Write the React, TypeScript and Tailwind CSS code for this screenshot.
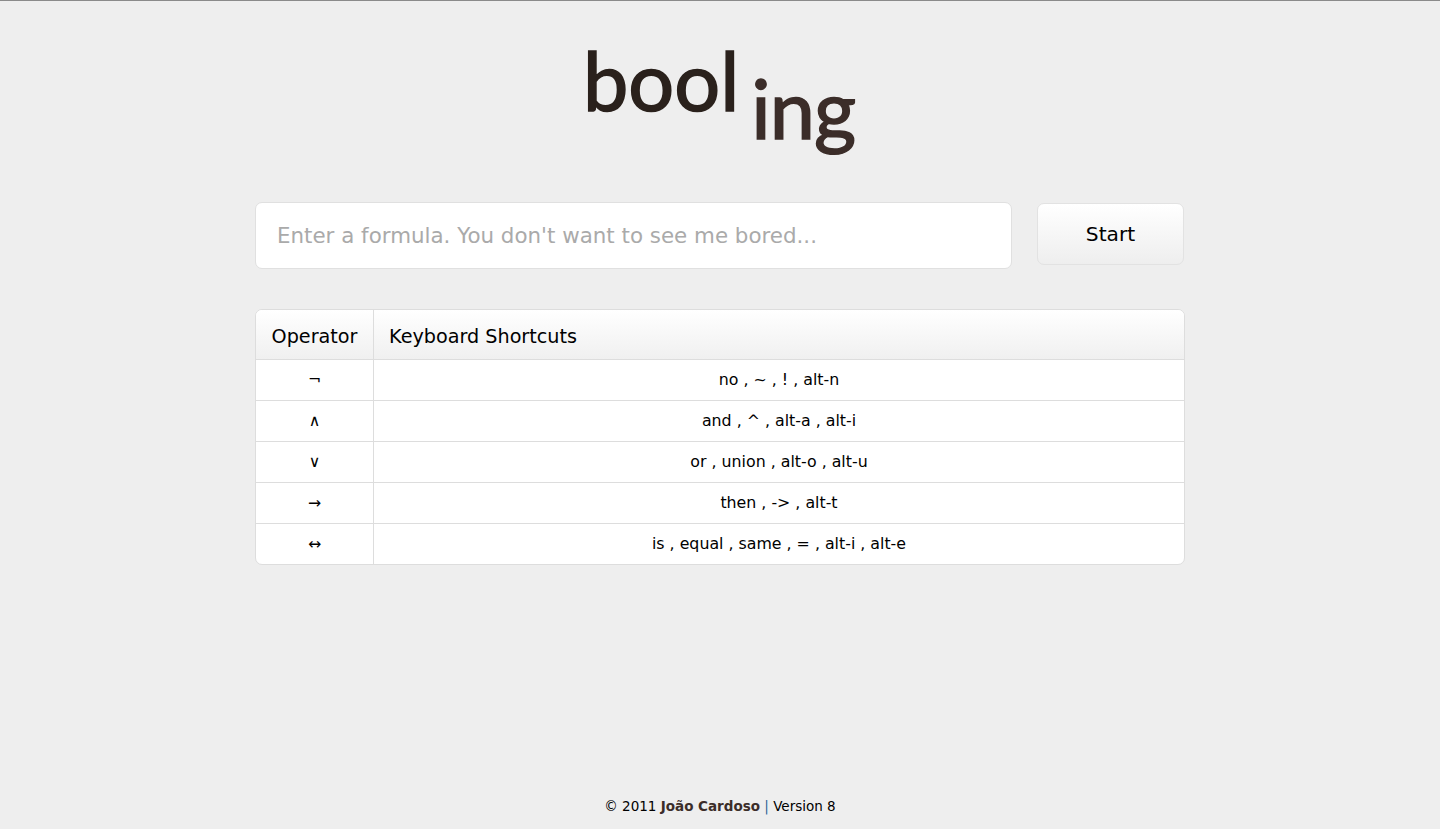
const rows = [
  { op: "¬", keys: "no , ~ , ! , alt-n" },
  { op: "∧", keys: "and , ^ , alt-a , alt-i" },
  { op: "∨", keys: "or , union , alt-o , alt-u" },
  { op: "→", keys: "then , -> , alt-t" },
  { op: "↔", keys: "is , equal , same , = , alt-i , alt-e" },
];

const App = () => {
  return (
    <div className="h-[829px] bg-[#eeeeee] border-t border-[#8a8a8a] flex flex-col items-center overflow-hidden font-['DejaVu_Sans',sans-serif] text-black">
      <div className="w-[930px] flex flex-col">
        <div className="flex justify-center h-[201px] pr-[2px] font-['Lato',sans-serif]">
          <span className="text-[81px] leading-none mt-[38px] text-[#2a211c] [-webkit-text-stroke:1.5px_#2a211c]">bool</span>
          <span className="text-[81px] leading-none mt-[66px] ml-[12px] tracking-[-1px] text-[#3b2d29] [-webkit-text-stroke:1.5px_#3b2d29]">ing</span>
        </div>

        <div className="flex items-start justify-between">
          <input
            placeholder="Enter a formula. You don't want to see me bored..."
            className="w-[757px] h-[67px] pl-[21px] pr-[22px] bg-white border border-[#e0e0e0] rounded-[7px] text-[21.4px] outline-none placeholder:text-[#aaaaaa]"
          />
          <button className="w-[147px] h-[62px] mt-[1px] mr-[1px] pt-[1px] rounded-[7px] border border-[#e2e2e2] bg-gradient-to-b from-white to-[#eeeeee] text-[20.2px]">
            Start
          </button>
        </div>

        <div className="mt-[40px] bg-white border border-[#dddddd] rounded-[7px] overflow-hidden">
          <div className="flex h-[50px] items-center text-[19.2px] bg-gradient-to-b from-white to-[#f0f0f0] border-b border-[#dddddd]">
            <div className="w-[118px] h-full pt-[6px] flex items-center justify-center border-r border-[#dddddd] shrink-0">
              Operator
            </div>
            <div className="pl-[15px] pt-[6px]">Keyboard Shortcuts</div>
          </div>
          {rows.map((r, index) => (
            <div
              key={index}
              className="flex h-[41px] text-[15.8px] border-b border-[#dddddd] last:border-b-0 last:h-[40px]"
            >
              <div className="w-[118px] flex items-center justify-center border-r border-[#dddddd] shrink-0">
                {r.op}
              </div>
              <div className="flex-1 flex items-center justify-center">{r.keys}</div>
            </div>
          ))}
        </div>
      </div>

      <p className="mt-auto mb-[13px] text-[13.5px] leading-[20px]">
        © 2011 <b className="text-[#3b2d29]">João Cardoso</b>{" "}
        <span className="text-[#2a6496]">|</span> Version 8
      </p>
    </div>
  );
};

export default App;
